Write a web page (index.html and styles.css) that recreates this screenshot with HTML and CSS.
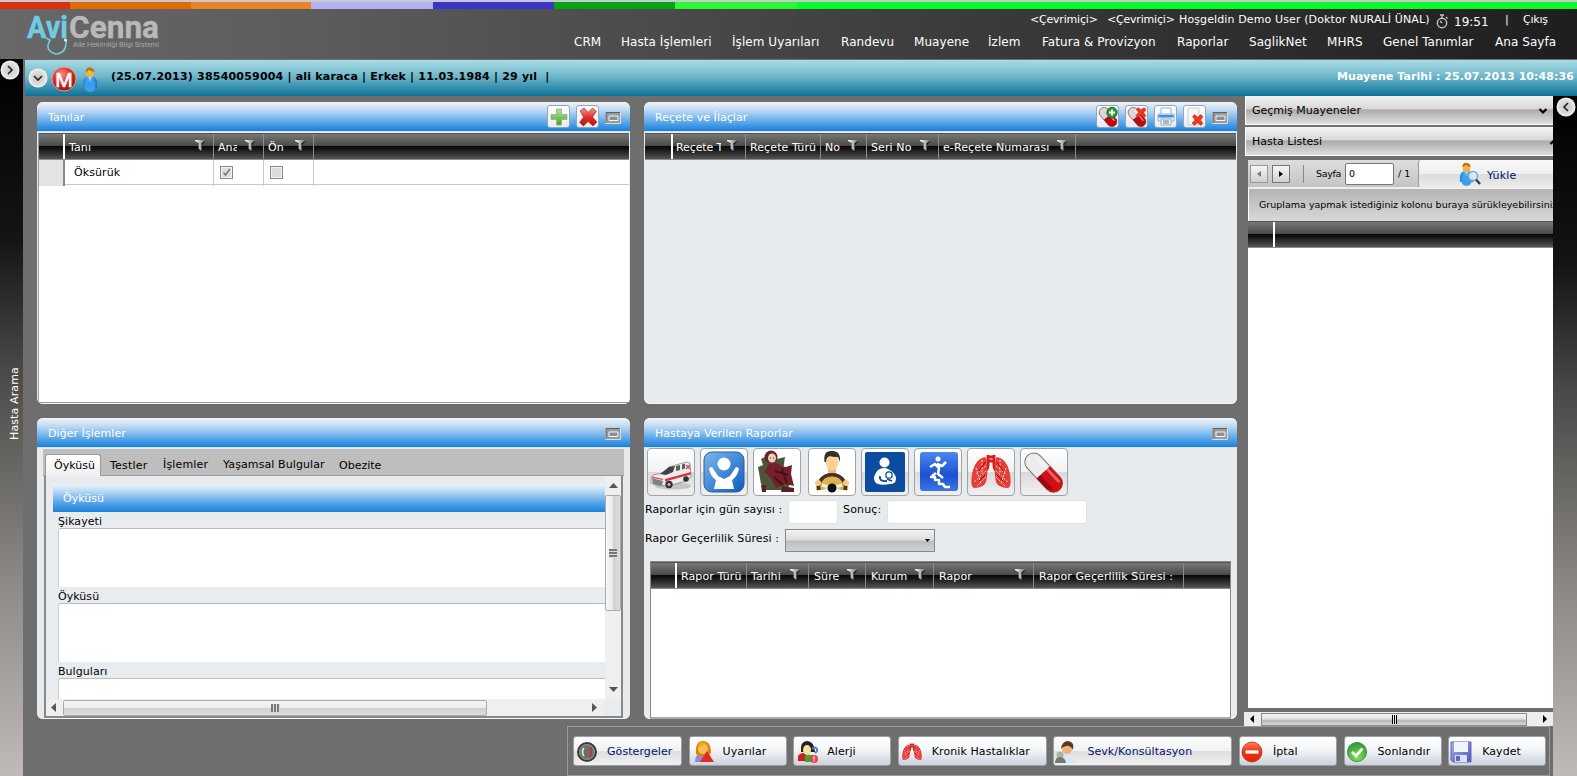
FILE: index.html
```html
<!DOCTYPE html>
<html lang="tr">
<head>
<meta charset="utf-8">
<title>AviCenna</title>
<link rel="stylesheet" href="styles.css">
</head>
<body>
<svg class="defs" width="0" height="0">
  <defs>
    <linearGradient id="gFun" x1="0" y1="0" x2="1" y2="0"><stop offset="0" stop-color="#fff"/><stop offset="1" stop-color="#777"/></linearGradient>
    <radialGradient id="gRed" cx=".4" cy=".3" r=".8"><stop offset="0" stop-color="#ff8a7c"/><stop offset=".5" stop-color="#d92a25"/><stop offset="1" stop-color="#8f0d0d"/></radialGradient>
    <linearGradient id="gStop" x1="0" y1="0" x2="0" y2="1"><stop offset="0" stop-color="#ff8060"/><stop offset=".5" stop-color="#f0300f"/><stop offset="1" stop-color="#e02408"/></linearGradient>
    <radialGradient id="gOk" cx=".5" cy=".8" r=".8"><stop offset="0" stop-color="#7fe05a"/><stop offset="1" stop-color="#2f9434"/></radialGradient>
    <radialGradient id="gKnob" cx=".5" cy=".5" r=".5"><stop offset="0" stop-color="#c8c8c8"/><stop offset=".75" stop-color="#dedede"/><stop offset="1" stop-color="#fafafa"/></radialGradient>
    <linearGradient id="gPlus" x1="0" y1="0" x2="0" y2="1"><stop offset="0" stop-color="#b8dfa0"/><stop offset="1" stop-color="#46a824"/></linearGradient>
    <linearGradient id="gX" x1="0" y1="0" x2="0" y2="1"><stop offset="0" stop-color="#ee9a94"/><stop offset=".5" stop-color="#e2302c"/><stop offset="1" stop-color="#b80f12"/></linearGradient>
    <linearGradient id="gBlue" x1="0" y1="0" x2="1" y2="1"><stop offset="0" stop-color="#7db8ee"/><stop offset="1" stop-color="#0c5cc2"/></linearGradient>
    <linearGradient id="gRun" x1="0" y1="0" x2="0" y2="1"><stop offset="0" stop-color="#4c86ee"/><stop offset=".6" stop-color="#1c50d0"/><stop offset="1" stop-color="#3a76e4"/></linearGradient>
    <linearGradient id="gDisk" x1="0" y1="0" x2="1" y2="1"><stop offset="0" stop-color="#a8aef0"/><stop offset="1" stop-color="#5058bc"/></linearGradient>
    <linearGradient id="gBody" x1="0" y1="0" x2="1" y2="0"><stop offset="0" stop-color="#1a86dc"/><stop offset=".5" stop-color="#52b8fa"/><stop offset="1" stop-color="#1672c8"/></linearGradient>
    <symbol id="funnel" viewBox="0 0 12 14"><path d="M1 1h10.500L8 5v8.500L5 10.500V5z" fill="#1c1c1c"/><path d="M0 0h10.500v1L7 3.500V12L4 9.500v-6L0 1z" fill="url(#gFun)"/></symbol>
    <symbol id="min" viewBox="0 0 16 12"><path d="M.5.5h15v11H.5z" fill="#9a9a9a" stroke="#dcdcdc"/><path d="M1 11V.500h14" fill="none" stroke="#5c6068"/><path d="M4 4h9v4.500H4z" fill="#8b9098" stroke="#f0f6fc"/></symbol>
    <symbol id="pill" viewBox="0 0 20 20"><g transform="rotate(50 10 10)"><rect x="-1" y="5" width="22" height="10" rx="5" fill="#dcd6d6" stroke="#8a6060" stroke-width=".8"/><path d="M9.500 5H16a5 5 0 0 1 0 10H9.500z" fill="#b80c10"/><path d="M3 7.500h14" stroke="#fff" stroke-opacity=".5" stroke-width="1.500"/></g></symbol>
    <symbol id="person" viewBox="0 0 16 25"><path d="M1 16q0-7 7-7t7 7v5H1z" fill="url(#gBody)"/><path d="M3 15h10v7q-1 3-5 3t-5-3z" fill="#3d9cf0"/><path d="M6 9h4l-2 4z" fill="#d8ecfa"/><ellipse cx="8" cy="6" rx="4" ry="4.500" fill="#f4b13c"/><path d="M3.500 5Q4 0 8 .5t4.500 4.500Q8 4 7 2.500 6 5 3.500 5z" fill="#b87414"/></symbol>
    <symbol id="lungs" viewBox="0 0 40 36"><path d="M17 1v10q0 5-5 8M23 1v10q0 5 5 8M17 3h6M17 7h6" fill="none" stroke="#d51f1c" stroke-width="3"/><path d="M14 3Q4 5 1 20q-2 13 2 14 7 0 11-4 3-6 2-17 0-9-2-10zM26 3q10 2 13 17 2 13-2 14-7 0-11-4-3-6-2-17 0-9 2-10z" fill="#e4403a"/><path d="M15 12 5 20m10-3L3 28m12-5-9 9m5-26v14m-6-6 5 16M25 12l10 8m-10-3 12 11m-12-5 9 9M29 6v14m6-6-5 16" fill="none" stroke="#ffd8d0" stroke-width="1" stroke-dasharray="2 1.500"/><path d="M14 8 8 17m6 4-6 6M26 8l6 9m-6 4 6 6" stroke="#8e1010" stroke-width="1"/></symbol>
    <symbol id="cross" viewBox="0 0 18 18"><path d="M2 3.500 5.500 1 9 5 13 1l3.500 3L13 9l4 4.500-3.500 3.500L9 13l-4 4-3.500-3L5 9z" fill="url(#gX)" stroke="#b82a26" stroke-width=".7"/></symbol>
    <symbol id="rx" viewBox="0 0 12 12"><path d="M1 2.500 3 .5 6 3 9.500.5l2 2.500L9 6l2.500 3.500-2 2L6 9l-3.500 2.500-2-2.500L3.500 6z" fill="#f0371c" stroke="#c3240e" stroke-width=".5"/></symbol>
  </defs>
</svg>

<div class="strip"><i></i><i></i><i></i><i></i><i></i><i></i><i></i><i></i></div>
<header class="top">
  <svg class="logo" width="140" height="44" viewBox="0 0 140 44">
    <text x="1" y="26" class="logo-a" textLength="41" lengthAdjust="spacingAndGlyphs">Avi</text>
    <text x="43" y="26" class="logo-b" textLength="90" lengthAdjust="spacingAndGlyphs">Cenna</text>
    <path d="M20 26l4 2q-6 11 6 14 11-1 10-14" fill="none" stroke="#72c6de" stroke-width="1.700"/>
    <circle cx="39.500" cy="28" r="1.500" fill="#e8f8ff"/>
    <text x="47" y="35" class="logo-s" textLength="86" lengthAdjust="spacingAndGlyphs">Aile Hekimliği Bilgi Sistemi</text>
  </svg>
  <div class="top-right">
    <div class="status">
      <span>&lt;Çevrimiçi&gt;</span><span>&lt;Çevrimiçi&gt;</span><span class="hello">Hoşgeldin Demo User (Doktor NURALİ ÜNAL)</span>
      <svg width="12" height="15" viewBox="0 0 12 15"><circle cx="6" cy="9" r="4.700" fill="none" stroke="#c4c4c4" stroke-width="1.400"/><path d="M4 1h4M6 1v3M6 9 4 7M10 3l1.500 1.500" stroke="#c4c4c4" stroke-width="1.300"/></svg>
      <span class="clock">19:51</span><span>|</span><span class="exit">Çıkış</span>
    </div>
    <nav class="menu"><a>CRM</a><a>Hasta İşlemleri</a><a>İşlem Uyarıları</a><a>Randevu</a><a>Muayene</a><a>İzlem</a><a>Fatura &amp; Provizyon</a><a>Raporlar</a><a>SaglikNet</a><a>MHRS</a><a>Genel Tanımlar</a><a>Ana Sayfa</a></nav>
  </div>
</header>

<div class="shell">
  <aside class="side side-left">
    <svg class="round" width="20" height="20" viewBox="0 0 20 20"><circle cx="10" cy="10" r="9.500" fill="url(#gKnob)"/><path d="M8 6l4 4-4 4" fill="none" stroke="#222" stroke-width="1.600"/></svg>
    <span class="side-label">Hasta Arama</span>
  </aside>
  <div class="main">
    <div class="patient">
      <svg width="20" height="20" viewBox="0 0 20 20"><circle cx="10" cy="10" r="9.500" fill="url(#gKnob)"/><path d="M6 8l4 4 4-4" fill="none" stroke="#222" stroke-width="1.600"/></svg>
      <svg class="m-icon" width="26" height="26" viewBox="0 0 26 26"><circle cx="13" cy="13" r="12" fill="url(#gRed)" stroke="#e8b0aa" stroke-width=".8"/><text x="13" y="20.500" text-anchor="middle" class="m-text">M</text></svg>
      <svg class="p-icon" width="16" height="25"><use href="#person"/></svg>
      <b class="p-info">(25.07.2013) 38540059004 | ali karaca | Erkek | 11.03.1984 | 29 yıl&nbsp; |</b>
      <b class="p-date">Muayene Tarihi : 25.07.2013 10:48:36</b>
    </div>
    <div class="body">
      <div class="center">
        <div class="upper">
          <div class="panels">
            <section class="panel">
              <div class="title"><span>Tanılar</span>
                <div class="tools">
                  <i class="tb"><svg width="18" height="18" viewBox="0 0 18 18"><path d="M6.500 1h5v5.500H17v5h-5.500V17h-5v-5.500H1v-5h5.500z" fill="url(#gPlus)" stroke="#8cb878" stroke-width=".8"/></svg></i>
                  <i class="tb"><svg width="20" height="20"><use href="#cross"/></svg></i>
                  <svg class="min" width="16" height="12"><use href="#min"/></svg>
                </div>
              </div>
              <div class="grid white">
                <div class="gh g1"><i></i><b>Tanı<svg><use href="#funnel"/></svg></b><b><u>Ana</u><svg><use href="#funnel"/></svg></b><b>Ön<svg><use href="#funnel"/></svg></b><i></i></div>
                <div class="row g1"><i></i><span>Öksürük</span><span><em class="chk"><svg width="9" height="9" viewBox="0 0 9 9"><path d="M1.500 4.500 3.500 7 8 1" fill="none" stroke="#777" stroke-width="1.400"/></svg></em></span><span><em class="chk"></em></span><span></span></div>
              </div>
            </section>

            <section class="panel">
              <div class="title"><span>Reçete ve İlaçlar</span>
                <div class="tools">
                  <i class="tb"><svg width="22" height="21" viewBox="0 0 22 21"><use href="#pill" x="1" y="1" width="20" height="20"/><circle cx="15" cy="6.500" r="5.200" fill="#2b9a3b" stroke="#13702a"/><path d="M12 6.500h6M15 3.500v6" stroke="#fff" stroke-width="2"/></svg></i>
                  <i class="tb"><svg width="22" height="21" viewBox="0 0 22 21"><use href="#pill" x="1" y="1" width="20" height="20"/><use href="#rx" x="9" y="1" width="12" height="11"/></svg></i>
                  <i class="tb"><svg width="20" height="19" viewBox="0 0 20 19"><path d="M5 1h10v7H5z" fill="#fff" stroke="#8ab4e0"/><path d="M2 7h16v7H2z" fill="#e4effb" stroke="#8fb4da"/><path d="M2.500 8h15v2.500h-15z" fill="#3f8fe0"/><path d="M5 12h10v6H5z" fill="#f4f8fc" stroke="#93a7bc"/><path d="M7 14h6M7 16h6" stroke="#5578a0"/></svg></i>
                  <i class="tb"><svg width="19" height="20" viewBox="0 0 19 20"><path d="M3 1h11v17H3z" fill="#f6f6f6" stroke="#cfcfcf"/><use href="#rx" x="6.500" y="7" width="12" height="12"/></svg></i>
                  <svg class="min" width="16" height="12"><use href="#min"/></svg>
                </div>
              </div>
              <div class="grid">
                <div class="gh g2"><i></i><b><u>Reçete Tarihi</u><svg><use href="#funnel"/></svg></b><b>Reçete Türü</b><b>No<svg><use href="#funnel"/></svg></b><b>Seri No<svg><use href="#funnel"/></svg></b><b>e-Reçete Numarası<svg><use href="#funnel"/></svg></b><i></i></div>
              </div>
            </section>

            <section class="panel">
              <div class="title"><span>Diğer İşlemler</span><div class="tools"><svg class="min" width="16" height="12"><use href="#min"/></svg></div></div>
              <div class="tabs-box">
                <div class="tabs"><a class="on">Öyküsü</a><a>Testler</a><a>İşlemler</a><a>Yaşamsal Bulgular</a><a>Obezite</a></div>
                <div class="tab-body">
                  <div class="form-view">
                    <div class="form">
                      <div class="sub">Öyküsü</div>
                      <label>Şikayeti</label><div class="area"></div>
                      <label>Öyküsü</label><div class="area"></div>
                      <label>Bulguları</label><div class="area"></div>
                    </div>
                    <div class="vs"><svg width="9" height="5"><path d="M4.500 0 9 5H0z"/></svg><div class="vthumb"><i></i></div><svg class="dn" width="9" height="5"><path d="M0 0h9L4.500 5z"/></svg></div>
                  </div>
                  <div class="hs"><svg width="5" height="9"><path d="M5 0v9L0 4.500z"/></svg><div class="hthumb"><i></i></div><svg class="rt" width="5" height="9"><path d="M0 0v9l5-4.500z"/></svg></div>
                </div>
              </div>
            </section>

            <section class="panel">
              <div class="title"><span>Hastaya Verilen Raporlar</span><div class="tools"><svg class="min" width="16" height="12"><use href="#min"/></svg></div></div>
              <div class="reports">
                <div class="icons">
                  <i><svg width="44" height="44" viewBox="0 0 44 44"><ellipse cx="24" cy="36" rx="18" ry="3.500" fill="#c4c4c4"/><path d="M2 29l2-4 10-2 6-6 17-5 4 1 1 14-5 4-18 5-12-1-5-2z" fill="#ececec" stroke="#8a8a8a" stroke-width=".8"/><path d="M11 24l9-7 6-1-2 6-7 3z" fill="#3f4448"/><path d="M27 16l4-1v5l-4 1zM33 14.500l3-1v5l-3 1z" fill="#5a5e62"/><path d="M16 29l26-7v2.500l-26 7z" fill="#d9343c"/><path d="M3 28l11 3-1 5-9-2z" fill="#7e8084"/><path d="M3 27l11 2.500" stroke="#d9343c" stroke-width="1.200"/><circle cx="20" cy="34.500" r="3.700" fill="#333"/><circle cx="20" cy="34.500" r="1.600" fill="#bbb"/><circle cx="37" cy="29" r="2.800" fill="#333"/><path d="M37 15l4 4m-4 0 4-4" stroke="#e0444a" stroke-width="1.300"/></svg></i>
                  <i><svg width="44" height="44" viewBox="0 0 44 44"><rect x="2" y="2" width="40" height="40" rx="8" fill="url(#gBlue)" stroke="#2a5e9c"/><circle cx="22" cy="14" r="6.500" fill="#fff"/><path d="M7 18l3-1 6 9 6 3 6-3 6-9 3 1q-1 8-7 12l2 9H12l2-9q-6-4-7-12z" fill="#fff"/></svg></i>
                  <i><svg width="44" height="44" viewBox="0 0 44 44"><path d="M6 9q5-4 16 0l8-2-2 14 7 13-3 6H11l-5-6-3-17 5-2z" fill="#4b5638"/><path d="M14 14q8-3 12 2l5 1 6-2-1 9 3 12-9-2-9 4-6-11-6-5z" fill="#74202a"/><circle cx="16" cy="7" r="6.500" fill="#742028"/><ellipse cx="17" cy="8" rx="4" ry="4.500" fill="#efd0b8"/><path d="M15 8h1M18 8h1" stroke="#333"/><path d="M20 21l13 4M19 27l9 8M27 19l5 15" stroke="#47101a" stroke-width="2" fill="none"/><path d="M27 36l12 2v4H26zM6 35h5v7H7z" fill="#5a2224"/></svg></i>
                  <i class="gap"><svg width="44" height="44" viewBox="0 0 44 44"><path d="M6 40q0-16 16-16t16 16z" fill="#e0b04a"/><path d="M18 18h8v7l-4 3-4-3z" fill="#f0b87c"/><ellipse cx="22" cy="12" rx="6.500" ry="8.500" fill="#ffd09a"/><path d="M14.500 12Q13 1 21 1q10-1 9 11l-2-5q-6 0-8-1-4 1-4 6z" fill="#34302c"/><path d="M9 40a13.500 12 0 1 1 26 0" fill="none" stroke="#3c342e" stroke-width="3.500"/><path d="M12 35l10 3 10-3M14 41l6-3M30 41l-6-3" stroke="#eee" stroke-width="3"/><circle cx="22" cy="38" r="4.500" fill="#111"/><circle cx="8" cy="33" r="3" fill="#ffc88a"/><circle cx="36" cy="33" r="3" fill="#ffc88a"/></svg></i>
                  <i><svg width="44" height="44" viewBox="0 0 44 44"><rect x="2" y="2" width="40" height="40" rx="2" fill="#0b4c9e"/><circle cx="21.500" cy="12.500" r="5" fill="#fff"/><path d="M15 20q6-4 12 0 6 4 6 9 0 5-6 5-12 2-15-2-3-5 3-12z" fill="#fff"/><circle cx="26" cy="25" r="3.200" fill="#fff" stroke="#0b4c9e" stroke-width="1.300"/><path d="M17 26q-1 6 7 5M24 29l5 2" fill="none" stroke="#0b4c9e" stroke-width="1.800"/></svg></i>
                  <i><svg width="44" height="44" viewBox="0 0 44 44"><rect x="4" y="2" width="38" height="39" rx="3" fill="url(#gRun)"/><circle cx="22" cy="9" r="2.500" fill="#fff"/><path d="M14 17l5-3 4 4-1 6 5 4M21 14l5 2 4-4M20 23l-4 3M14 27h5v3h4v4h4l2 3h5" stroke="#fff" stroke-width="2.500" fill="none" stroke-linejoin="round"/></svg></i>
                  <i><svg width="40" height="36"><use href="#lungs"/></svg></i>
                  <i><svg width="44" height="44" viewBox="0 0 44 44"><g transform="rotate(47 22 23)"><rect x="-2" y="14" width="47" height="18" rx="9" fill="#ececec" stroke="#777"/><path d="M21 14h15a9 9 0 0 1 0 18H21z" fill="#d30f16"/><path d="M21 27h20q-3 5-8 5H21z" fill="#9e0a10"/><path d="M5 18h33" stroke="#fff" stroke-width="3" stroke-opacity=".35" stroke-linecap="round"/></g></svg></i>
                </div>
                <div class="line"><label class="l1">Raporlar için gün sayısı :</label><div class="inp w50"></div><label class="l2">Sonuç:</label><div class="inp w200"></div></div>
                <div class="line two"><label class="l3">Rapor Geçerlilik Süresi :</label><div class="combo"><svg width="5" height="3"><path d="M0 0h5L2.500 3z"/></svg></div></div>
                <div class="rgrid">
                  <div class="gh g4"><i></i><b>Rapor Türü</b><b>Tarihi<svg><use href="#funnel"/></svg></b><b>Süre<svg><use href="#funnel"/></svg></b><b>Kurum<svg><use href="#funnel"/></svg></b><b>Rapor<svg><use href="#funnel"/></svg></b><b>Rapor Geçerlilik Süresi :</b><i></i></div>
                </div>
              </div>
            </section>
          </div>

          <div class="right">
            <div class="acc">Geçmiş Muayeneler<svg width="10" height="8" viewBox="0 0 10 8"><path d="M1.500 2 5 5.500 8.500 2" fill="none" stroke="#000" stroke-width="2.200"/></svg></div>
            <div class="acc open">Hasta Listesi<svg width="10" height="8" viewBox="0 0 10 8"><path d="M1.500 6 5 2.500 8.500 6" fill="none" stroke="#000" stroke-width="2.200"/></svg></div>
            <div class="list">
              <div class="pager">
                <i class="pg off"><svg width="4" height="6"><path d="M4 0v6L0 3z"/></svg></i><i class="pg"><svg width="4" height="6"><path d="M0 0v6l4-3z"/></svg></i><i class="bar"></i>
                <span class="sayfa">Sayfa</span><span class="num">0</span><span class="of">/ 1</span>
                <div class="load"><svg width="23" height="24" viewBox="0 0 23 24"><use href="#person" x="0" y="0" width="15" height="24"/><circle cx="14" cy="14" r="4.500" fill="#d9eefc" fill-opacity=".9" stroke="#8ea4b4" stroke-width="1.500"/><path d="M17 17.500l4 4.500" stroke="#345" stroke-width="2.500"/></svg><span>Yükle</span></div>
              </div>
              <div class="group">Gruplama yapmak istediğiniz kolonu buraya sürükleyebilirsiniz</div>
              <div class="gh g5"><i></i><i></i></div>
              <div class="blank"></div>
            </div>
            <div class="rs"><svg width="4" height="8"><path d="M4 0v8L0 4z"/></svg><div class="rthumb"><i></i></div><svg class="rr" width="4" height="8"><path d="M0 0v8l4-4z"/></svg></div>
          </div>
        </div>

        <div class="foot">
          <div class="btn flat b1"><svg width="22" height="22" viewBox="0 0 22 22"><circle cx="11" cy="11" r="9" fill="#66716a" stroke="#3c3c3c" stroke-width="2"/><circle cx="11" cy="11" r="7.300" fill="none" stroke="#999" stroke-width="1"/><path d="M8 15q-3-4 0-8" stroke="#eee" stroke-width="1.500" fill="none"/><path d="M15 6v7q-1 3-2 3" stroke="#cc3038" stroke-width="2" fill="none"/></svg><span>Göstergeler</span></div>
          <div class="btn"><svg width="22" height="22" viewBox="0 0 22 22"><path d="M1 21q0-9 8-9t8 9z" fill="#8f88dc"/><path d="M2 13Q1 0 9 0t8 12l-3 3H5z" fill="#d98408"/><circle cx="9" cy="8" r="5" fill="#f9bd55"/><path d="M4 6q5 0 6-4l4 4q0-5-5-5T4 6z" fill="#efa91c"/><path d="M13 10l7 11H6z" fill="#e22b1c"/></svg><span>Uyarılar</span></div>
          <div class="btn"><svg width="22" height="22" viewBox="0 0 22 22"><path d="M-1 20q0-8 7-8t7 8z" fill="#d01e1e"/><path d="M3 11Q2 0 9 0t8 11z" fill="#222"/><ellipse cx="9" cy="9" rx="4" ry="5" fill="#ffdfa0"/><path d="M7 14h8v7H7z" fill="#3aa82e"/><path d="M14 8q3-3 5 0 1 2-2 4" stroke="#4a84c8" stroke-width="2" fill="none"/><circle cx="16" cy="18" r="4" fill="#e5454c"/><path d="M16 15.500v3M16 19.500v1" stroke="#fff" stroke-width="1.300"/></svg><span>Alerji</span></div>
          <div class="btn b4"><svg width="22" height="18"><use href="#lungs"/></svg><span>Kronik Hastalıklar</span></div>
          <div class="btn flat b5"><svg width="22" height="22" viewBox="0 0 22 22"><path d="M6 22q0-7 7-8 7 0 7 8z" fill="#d8e8f6"/><circle cx="12" cy="8" r="5" fill="#e9b27e"/><path d="M6 8Q7 0 13 0q7 1 5 9-3-5-7-4T6 8z" fill="#5c3a1c"/><circle cx="5" cy="14" r="3.500" fill="#a9b49c"/><path d="M0 22q0-6 5-6t6 6z" fill="#6d7a72"/></svg><span>Sevk/Konsültasyon</span></div>
          <div class="btn last"><svg width="22" height="22" viewBox="0 0 22 22"><circle cx="11" cy="11" r="10" fill="url(#gStop)" stroke="#bd2a18" stroke-width=".8"/><path d="M4.500 11h13" stroke="#fff" stroke-width="3.200"/></svg><span>İptal</span></div>
          <div class="btn last"><svg width="22" height="22" viewBox="0 0 22 22"><circle cx="11" cy="11" r="9.600" fill="url(#gOk)" stroke="#2b8a36" stroke-width=".8"/><path d="M6 11l4 4 6.500-7.500" fill="none" stroke="#fff" stroke-width="2.800"/></svg><span>Sonlandır</span></div>
          <div class="btn last"><svg width="22" height="22" viewBox="0 0 22 22"><path d="M1 1h20v20H3l-2-2z" fill="url(#gDisk)" stroke="#5c64be"/><path d="M4 1h14v10H4z" fill="#f2f5fd"/><path d="M5 14h12v7H5z" fill="#dfe2f4"/><path d="M6 15h4v5H6z" fill="#6068b8"/></svg><span>Kaydet</span></div>
        </div>
      </div>
      <aside class="side side-right"><svg class="round" width="20" height="20" viewBox="0 0 20 20"><circle cx="10" cy="10" r="9.500" fill="url(#gKnob)"/><path d="M12 6l-4 4 4 4" fill="none" stroke="#222" stroke-width="1.600"/></svg></aside>
    </div>
  </div>
</div>
</body>
</html>
```
FILE: styles.css
```css
* { box-sizing: border-box; }
body {
  margin: 0; width: 1577px; height: 776px; overflow: hidden;
  display: flex; flex-direction: column;
  background: #6e6e6e; color: #000;
  font: 11px/14px "DejaVu Sans", Verdana, sans-serif;
}
svg { display: block; flex: none; }
.defs { position: absolute; }
i, em { font-style: normal; }
u { text-decoration: none; }

.strip { display: grid; flex: none; height: 9px; border-top: 2px solid #c9c9d3; grid-template-columns: 70px 121px 120px 122px 121px 121px 122px 1fr; }
.strip i:nth-child(1) { background: #d9300f; }
.strip i:nth-child(2) { background: #de6c02; }
.strip i:nth-child(3) { background: #e98523; }
.strip i:nth-child(4) { background: #b5b0f0; }
.strip i:nth-child(5) { background: #3a34c8; }
.strip i:nth-child(6) { background: #04a414; }
.strip i:nth-child(7) { background: #27fa32; }
.strip i:nth-child(8) { background: #06fb28; }

.top { flex: none; height: 50px; display: flex; justify-content: space-between; background: linear-gradient(90deg, #686868, #5c5c5c 20%, #404040 55%, #1e1e1e); color: #fff; }
.logo { margin: 3px 0 0 26px; overflow: visible; }
.logo-a, .logo-b { font: bold 32px Roboto, sans-serif; }
.logo-a { fill: #72cbe4; stroke: #72cbe4; stroke-width: .4; }
.logo-b { fill: #b9b9bb; stroke: #b9b9bb; stroke-width: .4; }
.logo-s { font: 8px Roboto, sans-serif; fill: #a8a8a8; }
.status { display: flex; height: 22px; padding: 4px 0 0 456px; white-space: nowrap; letter-spacing: -.2px; }
.status span:nth-child(1) { width: 77px; }
.status span:nth-child(2) { width: 72px; }
.status .hello { width: 257px; letter-spacing: .12px; }
.status svg { margin-top: 1px; }
.status .clock { width: 51px; padding: 2px 0 0 6px; font-size: 12px; margin-right: 6px; letter-spacing: 0; }
.status span:nth-child(6) { width: 18px; }
.menu { display: grid; width: 1003px; grid-template-columns: 47px 111px 109px 73px 74px 54px 135px 72px 78px 56px 112px 70px; padding-top: 4px; white-space: nowrap; font-size: 12px; letter-spacing: .06px; }

.shell { flex: 1; display: flex; min-height: 0; }
.side { flex: none; background: linear-gradient(#000, #151413 25%, #4a4846 43%, #8a8784 72%, #c0bbb8); }
.side-left { width: 23px; display: flex; flex-direction: column; padding: 1px 0 0; }
.side-label { writing-mode: vertical-rl; transform: rotate(180deg); color: #fff; margin: 284px 0 0 3px; height: 76px; line-height: 23px; letter-spacing: .12px; white-space: nowrap; }
.side-right { width: 24px; padding: 1px 0 0 3px; }
.main { flex: 1; padding: 1px 0 0 2px; display: flex; flex-direction: column; min-width: 0; }
.patient { flex: none; height: 36px; display: flex; align-items: flex-start; background: linear-gradient(#a9dbe4, #6fb7ca 45%, #0d7299); padding: 8px 3px 0; font-size: 11px; white-space: nowrap; }
.m-icon { margin: -2px 0 0 3px; }
.m-text { font: 21px "Liberation Sans", sans-serif; fill: #fff; stroke: #fff; stroke-width: .6; }
.p-icon { margin: -1px 0 0 5px; }
.p-info { margin: 2px 0 0 13px; letter-spacing: .2px; }
.p-date { margin: 2px 0 0 auto; color: #fff; letter-spacing: .08px; }
.body { flex: 1; display: flex; min-height: 0; }
.center { width: 1528px; display: flex; flex-direction: column; }
.upper { height: 630px; display: flex; }

.panels { width: 1219px; padding: 6px 0 0 12px; display: grid; grid-template: 302px 301px / 593px 593px; gap: 14px; align-content: start; }
.panel { background: #e7ebee; border-radius: 6px; overflow: hidden; display: flex; flex-direction: column; box-shadow: inset 0 -1px 0 #f4f6f8; }
.title { flex: none; height: 30px; display: flex; justify-content: space-between; align-items: center; background: linear-gradient(#f2f4f7, #bcd9f3 28%, #5aa6e8 68%, #1c82dc 95%, #d3e6f6 96%); color: #fff; padding: 0 9px 0 11px; }
.title > span { padding-top: 1px; letter-spacing: .05px; }
.tools { display: flex; align-items: center; gap: 6px; }
.tb { width: 23px; height: 23px; border: 1px solid #8fa6be; border-radius: 3px; background: linear-gradient(#fff, #e9ecf0); display: flex; align-items: center; justify-content: center; margin-top: -1px; }
.min { margin-top: 1px; }
.grid { flex: 1; margin: 1px 1px 1px; }
.white { background: #fff; border: 1px solid #999; border-width: 0 0 1px 1px; }
.gh { display: grid; flex: none; height: 27px; border-top: 1px solid #555; border-bottom: 1px solid #8a8a8a; background: linear-gradient(#777, #4a4a4a 47%, #0a0a0a 50%, #141414 60%, #555); color: #fff; }
.gh > * { border-right: 1px solid #8b8b8b; font-weight: normal; padding: 2px 5px 0 4px; display: flex; align-items: center; justify-content: space-between; white-space: nowrap; overflow: hidden; min-width: 0; font-size: 11px; letter-spacing: .1px; }
.gh > :first-child { border-right: 2px solid #fff; }
.gh > :last-child { border-right: 0; }
.gh svg { width: 11px; height: 13px; margin: -2px 2px 0 8px; }
.gh u { overflow: hidden; flex: 1; min-width: 0; }
.g1 { grid-template-columns: 26px 149px 50px 50px 1fr; }
.g2 { grid-template-columns: 28px 73px 75px 46px 72px 137px 1fr; }
.g2 b:nth-child(2) svg { margin-left: 6px; }
.g2 b:nth-child(2) { padding-left: 3px; letter-spacing: -.1px; }
.g2 b:nth-child(3) { padding-right: 0; }
.g4 { grid-template-columns: 26px 70px 62px 57px 68px 100px 150px 1fr; }
.g4 b:nth-child(2) { padding-right: 0; }
.g4 b:nth-child(n+4) { padding-left: 5px; }
.g5 { grid-template-columns: 27px 1fr; }
.row { display: grid; height: 25px; border-bottom: 1px solid #c8c8c8; }
.row > * { border-right: 1px solid #c8c8c8; padding-left: 9px; line-height: 26px; letter-spacing: .08px; }
.row > i { background: #e3e3e3; border-right: 2px solid #888; }
.row > :last-child { border: 0; }
.row span + span { padding: 6px 0 0 6px; }
.chk { display: block; width: 13px; height: 13px; border: 1px solid #888; background: #dcdcdc; padding: 1px; box-shadow: inset 0 0 0 1px #f4f4f4; }

.tabs-box { flex: 1; margin: 1px 6px 1px; display: flex; flex-direction: column; min-height: 0; }
.tabs { height: 27px; flex: none; background: #bebebe; border-bottom: 1px solid #999; display: flex; padding: 5px 0 0 2px; }
.tabs a { line-height: 23px; height: 22px; white-space: nowrap; }
.tabs .on { width: 56px; background: linear-gradient(#fff, #f0f0f0); border: 1px solid #999; border-bottom: 0; border-radius: 3px 3px 0 0; padding-left: 8px; margin-right: 9px; line-height: 22px; }
.tabs a:nth-child(2) { width: 53px; letter-spacing: .2px; }
.tabs a:nth-child(3) { width: 60px; line-height: 21px; letter-spacing: .15px; }
.tabs a:nth-child(4) { width: 116px; line-height: 21px; letter-spacing: .1px; }
.tab-body { flex: 1; margin: 0 1px; border: 1px solid #888; border-width: 0 2px 2px; background: #e9ecef; display: flex; flex-direction: column; min-height: 0; }
.form-view { flex: 1; display: flex; min-height: 0; }
.form { width: 561px; padding: 8px 0 0 7px; overflow: hidden; }
.sub { height: 28px; background: linear-gradient(#eef3f8, #bcd9f3 25%, #5aa6e8 65%, #1c82dc); color: #fff; padding: 8px 0 0 10px; }
.form label { display: block; height: 16px; line-height: 20px; padding-left: 5px; letter-spacing: .05px; }
.area { height: 59px; margin-left: 5px; background: #fff; border-top: 1px solid #b8bcc0; border-left: 1px solid #ccc; border-radius: 3px 0 0; }
.vs { width: 16px; background: #efefef; display: flex; flex-direction: column; align-items: center; padding-top: 7px; fill: #555; }
.vthumb { width: 16px; height: 116px; margin-top: 7px; border: 1px solid #aaa; border-radius: 2px; background: linear-gradient(90deg, #f6f6f6, #ececec 50%, #d0d0d0 52%, #dedede); display: flex; align-items: center; justify-content: center; }
.vthumb i { width: 8px; height: 9px; background: repeating-linear-gradient(#777 0 2px, #ddd 2px 3px); }
.dn { margin: auto 0 7px; }
.hs { height: 17px; flex: none; background: #efefef; display: flex; align-items: center; padding-left: 5px; fill: #555; margin-right: 17px; }
.hthumb { width: 424px; height: 16px; margin-left: 7px; border: 1px solid #aaa; border-radius: 2px; background: linear-gradient(#f6f6f6, #ececec 50%, #d0d0d0 52%, #dedede); display: flex; align-items: center; justify-content: center; }
.hthumb i { width: 9px; height: 8px; background: repeating-linear-gradient(90deg, #777 0 2px, #ddd 2px 3px); }
.rt { margin: 0 7px 0 auto; }

.reports { flex: 1; display: flex; flex-direction: column; min-height: 0; }
.icons { display: flex; gap: 5px; padding: 0 0 0 3px; }
.icons i { width: 48px; height: 48px; border: 1px solid #a2a2a2; border-radius: 4px; background: linear-gradient(#fff, #f2f2f2 49%, #dadada 51%, #f0f0f0); display: flex; align-items: center; justify-content: center; overflow: hidden; }
.icons i:nth-child(3), .icons .gap { background: #fff; }
.icons .gap { margin-left: 2px; }
.line { display: flex; flex: none; margin-top: 4px; height: 24px; padding-left: 1px; white-space: nowrap; }
.line label { line-height: 20px; letter-spacing: .08px; }
.line .l1 { width: 143px; }
.line .l2 { width: 49px; padding-left: 5px; letter-spacing: .15px; }
.line .l3 { width: 140px; letter-spacing: .1px; }
.inp { height: 24px; background: #fff; border: 1px solid #e0e3e6; border-radius: 3px; }
.w50 { width: 50px; }
.w200 { width: 200px; }
.two { margin-top: 5px; }
.combo { width: 150px; height: 23px; border: 1px solid #888; background: linear-gradient(#f2f2f2, #ddd 48%, #bdbdbd 52%, #d0d0d0); display: flex; align-items: center; justify-content: flex-end; padding-right: 4px; }
.rgrid { flex: 1; margin: 8px 6px 0; border: 1px solid #888; border-bottom: 2px solid #aaa; background: #fff; }

.right { width: 309px; display: flex; flex-direction: column; overflow: hidden; padding-left: 1px; }
.acc { flex: none; height: 29px; display: flex; justify-content: space-between; align-items: center; padding: 1px 5px 0 6px; border-left: 1px solid #fff; border-bottom: 1px solid #fff; background: linear-gradient(#f4f4f4, #d8d8d8 45%, #ababab 50%, #dedede); }
.open { margin-top: 2px; padding-right: 0; }
.open svg { margin-right: -6px; }
.list { width: 305px; margin: 4px 0 0 3px; display: flex; flex-direction: column; height: 549px; }
.pager { height: 29px; flex: none; display: flex; align-items: center; background: linear-gradient(#ddd, #c4c4c4); border-bottom: 2px solid #eee; padding-left: 2px; font-size: 10px; white-space: nowrap; }
.pg { width: 18px; height: 18px; border: 1px solid #777; background: linear-gradient(#f6f6f6, #d0d0d0); display: flex; align-items: center; justify-content: center; margin-right: 4px; }
.off { border-color: #999; fill: #777; }
.bar { width: 1px; height: 18px; background: #888; margin-left: 9px; }
.sayfa { margin-left: 12px; width: 29px; letter-spacing: -.3px; font-size: 9.500px; }
.num { width: 49px; height: 22px; background: #fff; border: 1px solid #777; padding: 3px 0 0 3px; border-radius: 2px; font-size: 9.500px; }
.of { padding-left: 4px; width: 24px; font-size: 9.500px; }
.load { flex: 1; height: 27px; border: 1px solid #999; border-width: 0 0 0 1px; background: linear-gradient(#f8f8f8, #f0f0f0 50%, #dcdcdc 54%, #ececec); display: flex; align-items: center; gap: 4px; padding-left: 40px; font-size: 11px; color: #00126e; border-radius: 3px 0 0 3px; }
.load span { padding: 4px 0 0 1px; letter-spacing: .15px; }
.group { height: 32px; flex: none; border-left: 1px solid #fff; padding: 9px 0 0 10px; overflow: hidden; white-space: nowrap; font-size: 9.500px; letter-spacing: 0; background: linear-gradient(#b4b4b4, #d8d8d8); }
.blank { flex: 1; background: #fff; }
.rs { height: 14px; margin: 4px 0 0 -1px; background: #ededed; display: flex; align-items: center; padding-left: 6px; flex: none; }
.rthumb { width: 266px; height: 13px; margin-left: 7px; border: 1px solid #888; background: linear-gradient(#f4f4f4, #e0e0e0 48%, #b4b4b4 55%, #d6d6d6); display: flex; justify-content: center; align-items: center; }
.rthumb i { width: 5px; height: 9px; background: repeating-linear-gradient(90deg, #000 0 1px, #eee 1px 2px); }
.rr { margin: 0 6px 0 auto; }

.foot { width: 983px; height: 50px; margin-left: 542px; border: 1px solid #999; padding: 9px 0 0 5px; display: flex; gap: 6.600px; }
.btn { width: 98px; height: 30px; border: 1px solid #9aa0a8; border-radius: 3px; background: linear-gradient(#fff, #f4f6f8 45%, #ccd2dc); display: flex; align-items: center; padding: 0 0 1px 4px; gap: 7px; white-space: nowrap; flex: none; }
.btn svg { width: 22px; margin-top: 3px; }
.btn span { padding-top: 2px; letter-spacing: .08px; }
.flat { background: linear-gradient(#fbfbfb, #f2f2f2 50%, #dedede 52%, #f0f0f0); color: #00126e; }
.b1 { width: 109px; padding-left: 2px; gap: 9px; }
.b4 { width: 149px; padding-left: 2px; gap: 9px; }
.b5 { width: 179px; padding-left: 1px; gap: 10px; }
.last { padding-left: 1px; gap: 10px; }
```
